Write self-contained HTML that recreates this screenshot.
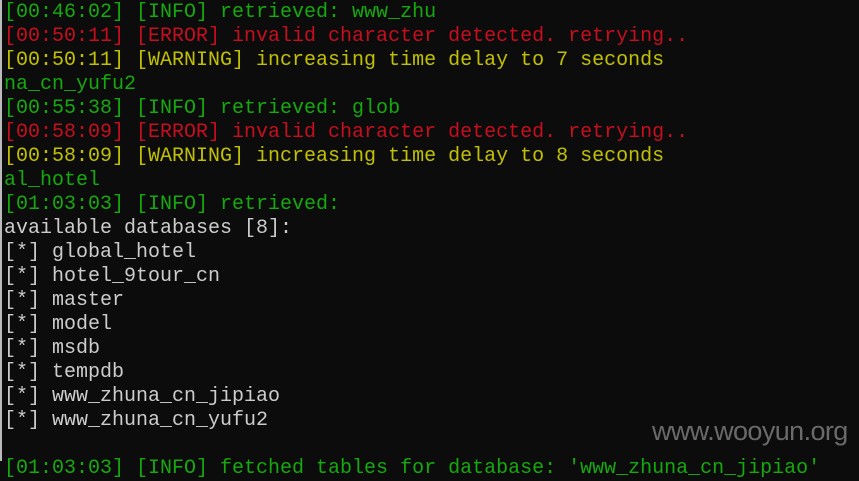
<!DOCTYPE html><html><head><style>
body{margin:0;width:859px;height:461px;background:#0c0c0c;overflow:hidden;position:relative}
pre{margin:0;position:absolute;left:4px;top:1px;font:20px/24px "Liberation Mono",monospace;color:#cccccc}
.g{color:#16a80f}.r{color:#c50f1f}.y{color:#c1c100}
.bar{position:absolute;left:0;top:0;width:2px;height:461px;background:#bbb}
.wm{position:absolute;left:652px;top:416px;font:27px "Liberation Sans",sans-serif;color:#6a6a6a;letter-spacing:-0.6px}
</style></head><body><div class="bar"></div><pre><span class="g">[00:46:02] [INFO] retrieved: www_zhu</span>
<span class="r">[00:50:11] [ERROR] invalid character detected. retrying..</span>
<span class="y">[00:50:11] [WARNING] increasing time delay to 7 seconds</span>
<span class="g">na_cn_yufu2</span>
<span class="g">[00:55:38] [INFO] retrieved: glob</span>
<span class="r">[00:58:09] [ERROR] invalid character detected. retrying..</span>
<span class="y">[00:58:09] [WARNING] increasing time delay to 8 seconds</span>
<span class="g">al_hotel</span>
<span class="g">[01:03:03] [INFO] retrieved:</span>
available databases [8]:
[*] global_hotel
[*] hotel_9tour_cn
[*] master
[*] model
[*] msdb
[*] tempdb
[*] www_zhuna_cn_jipiao
[*] www_zhuna_cn_yufu2

<span class="g">[01:03:03] [INFO] fetched tables for database: 'www_zhuna_cn_jipiao'</span></pre>
<div class="wm">www.wooyun.org</div></body></html>
